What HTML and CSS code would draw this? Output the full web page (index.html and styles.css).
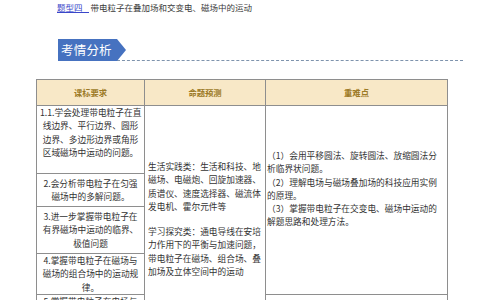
FILE: index.html
```html
<!DOCTYPE html>
<html lang="zh-CN">
<head>
<meta charset="utf-8">
<title>考情分析</title>
<link rel="stylesheet" href="styles.css">
</head>
<body>
<div class="page">
  <p class="topline"><span class="tag">题型四</span>带电粒子在叠加场和交变电、磁场中的运动</p>
  <div class="banner">
    <div class="tagbox">考情分析</div>
    <div class="dash"></div>
  </div>
  <table class="grid">
    <colgroup><col class="c1"><col class="c2"><col class="c3"></colgroup>
    <thead>
      <tr class="head"><th>课标要求</th><th>命题预测</th><th>重难点</th></tr>
    </thead>
    <tbody>
      <tr class="r1">
        <td class="req top">1.1.学会处理带电粒子在直<br>线边界、平行边界、圆形<br>边界、多边形边界或角形<br>区域磁场中运动的问题。</td>
        <td class="pred" rowspan="5">
          <p>生活实践类：生活和科技、地<br>磁场、电磁炮、回旋加速器、<br>质谱仪、速度选择器、磁流体<br>发电机、霍尔元件等</p>
          <p>学习探究类：通电导线在安培<br>力作用下的平衡与加速问题，<br>带电粒子在磁场、组合场、叠<br>加场及立体空间中的运动</p>
        </td>
        <td class="key" rowspan="4">
          <p>（1）会用平移圆法、旋转圆法、放缩圆法分<br>析临界状问题。</p>
          <p>（2）理解电场与磁场叠加场的科技应用实例<br>的原理。</p>
          <p>（3）掌握带电粒子在交变电、磁场中运动的<br>解题思路和处理方法。</p>
        </td>
      </tr>
      <tr class="r2"><td class="req">2.会分析带电粒子在匀强<br>磁场中的多解问题。</td></tr>
      <tr class="r3"><td class="req">3.进一步掌握带电粒子在<br>有界磁场中运动的临界、<br>极值问题</td></tr>
      <tr class="r4"><td class="req">4.掌握带电粒子在磁场与<br>磁场的组合场中的运动规<br>律。</td></tr>
      <tr class="r5"><td class="req top">5.掌握带电粒子在电场与<br>磁场的组合场中的运动规<br>律。</td><td class="empty"></td></tr>
    </tbody>
  </table>
</div>
</body>
</html>
```
FILE: styles.css
```css
html, body {
  margin: 0;
  padding: 0;
  background: #ffffff;
}
body {
  font-family: "Noto Sans CJK SC", "Noto Sans", sans-serif;
  color: #333333;
  width: 484px;
  height: 300px;
  overflow: hidden;
}
.page {
  padding-top: 2px;
}
.topline {
  margin: 0 0 0 57px;
  font-size: 8.5px;
  line-height: 11px;
  white-space: nowrap;
  color: #3a3a3a;
}
.tag {
  display: inline-block;
  color: #3946c9;
  border-bottom: 1px solid #3946c9;
  line-height: 9px;
  padding-right: 6px;
  margin-right: 2px;
}
.banner {
  display: flex;
  align-items: flex-end;
  margin: 26px 0 0 58px;
  width: 405px;
}
.tagbox {
  flex: none;
  width: 68px;
  height: 22px;
  box-sizing: border-box;
  padding-left: 3px;
  background: #4672c0;
  color: #ffffff;
  font-size: 12.5px;
  line-height: 22px;
  letter-spacing: 0.2px;
  clip-path: polygon(0 0, 59px 0, 68px 50%, 59px 100%, 0 100%);
}
.dash {
  flex: 1;
  margin-left: -9px;
  border-bottom: 1px dashed #7e93ad;
}
.grid {
  margin: 18px 0 0 36px;
  width: 411px;
  border-collapse: collapse;
  table-layout: fixed;
  font-size: 8.7px;
  line-height: 13.3px;
}
.c1 { width: 108px; }
.c2 { width: 121px; }
.c3 { width: 182px; }
.grid th, .grid td {
  border: 1px solid #8e8e8e;
  padding: 0;
}
.grid .head th {
  height: 25px;
  background: #f8e8c7;
  color: #9c7a26;
  font-size: 8.3px;
  font-weight: bold;
  text-align: center;
  vertical-align: middle;
}
.grid td.req {
  text-align: center;
  white-space: nowrap;
  vertical-align: middle;
  padding: 0 3px;
}
.grid td.req.top {
  vertical-align: top;
}
.r1 td.req { height: 67px; }
.r2 td { height: 32px; }
.r3 td { height: 46px; }
.r4 td { height: 40px; }
.r5 td { height: 40px; }
.grid td.pred {
  vertical-align: top;
  padding: 54px 2px 0 3px;
  white-space: nowrap;
}
.pred p {
  margin: 0 0 12px 0;
}
.grid td.key {
  vertical-align: top;
  padding: 43px 2px 0 1px;
  white-space: nowrap;
}
.key p {
  margin: 0;
}
```
